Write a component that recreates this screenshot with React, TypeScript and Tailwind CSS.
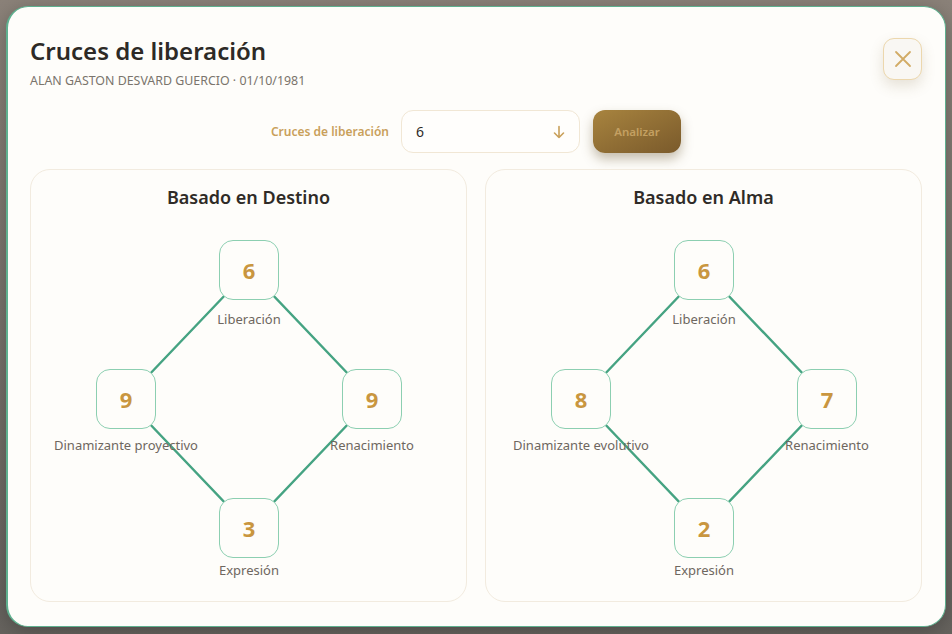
import React from "react";

type NodeDef = { value: number; label: string; x: number; y: number; ly: number };

function Diagram({ top, left, right, bottom }: { top: NodeDef; left: NodeDef; right: NodeDef; bottom: NodeDef }) {
  const nodes = [top, left, right, bottom];
  const c = (n: NodeDef) => ({ x: n.x + 30, y: n.y + 30 });
  const t = c(top), l = c(left), r = c(right), b = c(bottom);
  return (
    <div className="relative w-full h-[350px]">
      <svg className="absolute inset-0" width="436" height="350">
        <g stroke="#45a382" strokeWidth="2.4" strokeLinecap="round">
          <line x1={t.x} y1={t.y} x2={l.x} y2={l.y} />
          <line x1={t.x} y1={t.y} x2={r.x} y2={r.y} />
          <line x1={l.x} y1={l.y} x2={b.x} y2={b.y} />
          <line x1={r.x} y1={r.y} x2={b.x} y2={b.y} />
        </g>
      </svg>
      {nodes.map((n) => (
        <React.Fragment key={n.label + n.x}>
          <div
            className="absolute w-[60px] h-[60px] rounded-[14px] border-[1.5px] border-[#8ccfb1] bg-[#fefdfa] flex items-center justify-center text-[22px] font-bold text-[#c9963f]"
            style={{ left: n.x, top: n.y }}
          >
            {n.value}
          </div>
          <div
            className="absolute w-[200px] text-center text-[13px] leading-[18px] text-[#6e675f]"
            style={{ left: n.x + 30 - 100, top: n.y + n.ly }}
          >
            {n.label}
          </div>
        </React.Fragment>
      ))}
    </div>
  );
}

function Card({ title, values, leftLabel }: { title: string; values: [number, number, number, number]; leftLabel: string }) {
  return (
    <div className="w-[437px] h-[433px] rounded-[20px] border border-[#f2ebdf] bg-[#fefdfa] flex flex-col items-center pt-[14px]">
      <div className="text-[18px] leading-[26px] font-semibold text-[#2f2b27] mb-[30px]">{title}</div>
      <Diagram
        top={{ value: values[0], label: "Liberación", x: 188, y: 0, ly: 70 }}
        left={{ value: values[1], label: leftLabel, x: 65, y: 129, ly: 67 }}
        right={{ value: values[2], label: "Renacimiento", x: 311, y: 129, ly: 67 }}
        bottom={{ value: values[3], label: "Expresión", x: 188, y: 258, ly: 63 }}
      />
    </div>
  );
}

export default function App() {
  return (
    <div
      className="w-[952px] h-[634px] overflow-hidden bg-gradient-to-b from-[#8b8279] to-[#66635e] pt-[6px] pl-[6px]"
      style={{ fontFamily: '"Noto Sans", "Open Sans", sans-serif' }}
    >
      <div className="relative w-[940px] h-[621px] rounded-[22px] bg-[#fefdfa] border border-[#5fb08f] border-l-2 shadow-[0_4px_20px_rgba(0,0,0,0.25)]">
        <div className="flex justify-between pl-[22px] pr-[23px] pt-[28px]">
          <div>
            <div className="text-[24px] leading-[32px] font-semibold text-[#2d2a26]">Cruces de liberación</div>
            <div className="mt-[6px] text-[12.4px] leading-[16px] text-[#7a746c] uppercase">ALAN GASTON DESVARD GUERCIO · 01/10/1981</div>
          </div>
          <button className="mt-[3px] w-[39px] h-[42px] rounded-[11px] border border-[#ecd7ad] bg-[#f9f7f3] shadow-[0_6px_14px_rgba(120,100,60,0.18)] flex items-center justify-center">
            <svg width="20" height="20" viewBox="0 0 20 20" fill="none" stroke="#d2ab66" strokeWidth="1.8" strokeLinecap="round">
              <path d="M3 3 L17 17 M17 3 L3 17" />
            </svg>
          </button>
        </div>
        <div className="flex items-center justify-center gap-[12px] mt-[21px] pr-[1px]">
          <span className="text-[12px] font-semibold text-[#c9a05a]">Cruces de liberación</span>
          <div className="w-[179px] h-[43px] rounded-[12px] border border-[#f1e7d5] bg-[#fffefc] flex items-center justify-between pl-[14px] pr-[12px]">
            <span className="text-[14px] text-[#2d2a26]">6</span>
            <svg width="16" height="16" viewBox="0 0 16 16" fill="none" stroke="#c9a05a" strokeWidth="1.6" strokeLinecap="round" strokeLinejoin="round">
              <path d="M8 2.5 V13.5 M3.5 9 L8 13.5 L12.5 9" />
            </svg>
          </div>
          <button className="ml-[1px] w-[88px] h-[43px] rounded-[12px] bg-gradient-to-br from-[#a8843f] to-[#7a5a2b] shadow-[0_6px_12px_rgba(90,70,30,0.35)] text-[11.5px] font-semibold text-[#c4a062]">
            Analizar
          </button>
        </div>
        <div className="flex gap-[18px] pl-[22px] mt-[16px]">
          <Card title="Basado en Destino" values={[6, 9, 9, 3]} leftLabel="Dinamizante proyectivo" />
          <Card title="Basado en Alma" values={[6, 8, 7, 2]} leftLabel="Dinamizante evolutivo" />
        </div>
      </div>
    </div>
  );
}
